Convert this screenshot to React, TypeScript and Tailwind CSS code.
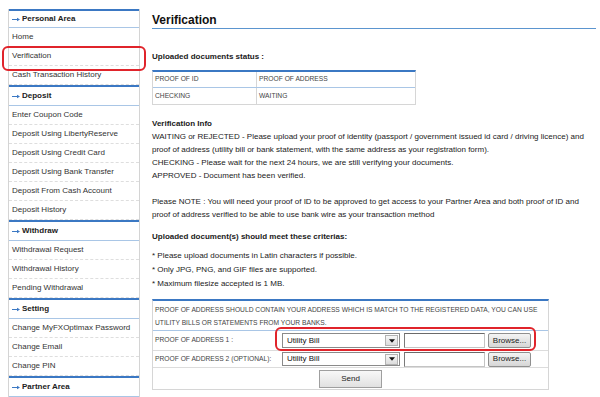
const sideGroups = [
  { title: "Personal Area", first: true, items: ["Home", "Verification", "Cash Transaction History"] },
  {
    title: "Deposit",
    first: false,
    items: [
      "Enter Coupon Code",
      "Deposit Using LibertyReserve",
      "Deposit Using Credit Card",
      "Deposit Using Bank Transfer",
      "Deposit From Cash Account",
      "Deposit History",
    ],
  },
  { title: "Withdraw", first: false, items: ["Withdrawal Request", "Withdrawal History", "Pending Withdrawal"] },
  { title: "Setting", first: false, items: ["Change MyFXOptimax Password", "Change Email", "Change PIN"] },
  { title: "Partner Area", first: false, items: [] as string[] },
];

function Arrow() {
  return (
    <svg width="8" height="5" viewBox="0 0 8 5" className="shrink-0">
      <path d="M0 2.5H5.5" stroke="#3b78c3" strokeWidth="1" />
      <path d="M5 0.8L8 2.5L5 4.2Z" fill="#3b78c3" />
    </svg>
  );
}

function Sidebar() {
  return (
    <aside className="ml-[8px] mt-[9px] w-[132px] shrink-0 border-x border-[#d4d4d4]">
      {sideGroups.map((group) => (
        <div key={group.title}>
          <div
            className={
              group.first
                ? "h-[19px] flex items-center gap-[2px] pl-[3px] border-t-2 border-t-[#3b78c3] border-b border-b-[#a9c6e6] font-bold text-[#222]"
                : "h-[21px] flex items-center gap-[2px] pl-[3px] border-t-2 border-t-[#3b78c3] border-b border-b-[#a9c6e6] font-bold text-[#222]"
            }
          >
            <Arrow />
            <span>{group.title}</span>
          </div>
          {group.items.map((item) => (
            <div
              key={item}
              className="h-[19px] flex items-center pl-[3px] border-b border-dashed border-[#dedede] text-[#333] whitespace-nowrap"
            >
              {item}
            </div>
          ))}
        </div>
      ))}
    </aside>
  );
}

function SelectBox({ tall }: { tall: boolean }) {
  return (
    <div
      className={
        tall
          ? "w-[118px] h-[15px] flex items-center justify-between border border-[#8a8a8a] bg-white"
          : "w-[118px] h-[14px] flex items-center justify-between border border-[#8a8a8a] bg-white"
      }
    >
      <span className="pl-[4px] text-[8px] text-[#111]">Utility Bill</span>
      <div className="mr-[1px] w-[13px] h-[11px] flex items-center justify-center border border-[#b3b3b3] bg-gradient-to-b from-[#f7f7f7] to-[#dcdcdc]">
        <svg width="6" height="4" viewBox="0 0 6 4">
          <path d="M0 0.3H6L3 3.7Z" fill="#111" />
        </svg>
      </div>
    </div>
  );
}

function UploadRow({ label, tall }: { label: string; tall: boolean }) {
  return (
    <div
      className={
        tall
          ? "h-[20px] flex items-center border-b border-[#dcdcdc]"
          : "h-[17px] flex items-center border-b border-[#dcdcdc]"
      }
    >
      <div className="w-[129px] pl-[2px] whitespace-nowrap">{label}</div>
      <SelectBox tall={tall} />
      <div className="ml-[4px] w-[81px] h-[15px] border border-t-[#6a6a6a] border-l-[#7a7a7a] border-r-[#c4c4c4] border-b-[#c4c4c4] bg-white" />
      <div className="ml-[3px] w-[43px] h-[15px] flex items-center justify-center rounded-[2px] border border-[#8f8f8f] bg-gradient-to-b from-[#f4f4f4] to-[#d6d6d6] text-[8px] text-[#222]">
        Browse...
      </div>
    </div>
  );
}

export default function App() {
  return (
    <div className="relative w-[600px] h-[397px] overflow-hidden bg-white flex items-start font-['Liberation_Sans',Arial,sans-serif] text-[8px] text-[#1a1a1a]">
      <Sidebar />

      <main className="ml-[12px] w-[444px] shrink-0">
        <h1 className="pt-[13px] pb-[1px] text-[12px] leading-[14px] font-bold text-[#111] border-b border-[#5b95cf]">
          Verification
        </h1>

        <p className="mt-[21px] leading-[13px] font-bold">Uploaded documents status :</p>

        {/* status table */}
        <div className="mt-[7px] w-[264px] border-t-2 border-t-[#3b78c3] border-x border-x-[#d6d6d6] border-b border-b-[#d6d6d6] text-[6.7px] text-[#444]">
          <div className="h-[16px] grid grid-cols-[104px_1fr] border-b border-[#a9c6e6]">
            <div className="flex items-center pl-[2px] border-r border-[#d6d6d6]">PROOF OF ID</div>
            <div className="flex items-center pl-[2px]">PROOF OF ADDRESS</div>
          </div>
          <div className="h-[16px] grid grid-cols-[104px_1fr]">
            <div className="flex items-center pl-[2px] border-r border-[#d6d6d6]">CHECKING</div>
            <div className="flex items-center pl-[2px]">WAITING</div>
          </div>
        </div>

        <div className="mt-[12px] leading-[13px] whitespace-nowrap">
          <p className="font-bold">Verification Info</p>
          <p>
            WAITING or REJECTED - Please upload your proof of identity (passport / government issued id card / driving licence) and
            <br />
            proof of address (utility bill or bank statement, with the same address as your registration form).
            <br />
            CHECKING - Please wait for the next 24 hours, we are still verifying your documents.
            <br />
            APPROVED - Document has been verified.
          </p>
        </div>

        <p className="mt-[13px] leading-[13px] whitespace-nowrap">
          Please NOTE : You will need your proof of ID to be approved to get access to your Partner Area and both proof of ID and
          <br />
          proof of address verified to be able to use bank wire as your transaction method
        </p>

        <p className="mt-[9px] leading-[13px] font-bold">Uploaded document(s) should meet these criterias:</p>

        <ul className="mt-[6px] leading-[14px]">
          <li>* Please upload documents in Latin characters if possible.</li>
          <li>* Only JPG, PNG, and GIF files are supported.</li>
          <li>* Maximum filesize accepted is 1 MB.</li>
        </ul>

        {/* upload form */}
        <div className="mt-[8px] w-[397px] border-t-2 border-t-[#3b78c3] border-x border-x-[#d6d6d6] border-b border-b-[#d6d6d6] text-[6.7px] text-[#444]">
          <div className="pt-[2px] pb-[1px] px-[2px] leading-[13px] border-b border-[#a9c6e6] whitespace-nowrap">
            PROOF OF ADDRESS SHOULD CONTAIN YOUR ADDRESS WHICH IS MATCH TO THE REGISTERED DATA, YOU CAN USE
            <br />
            UTILITY BILLS OR STATEMENTS FROM YOUR BANKS.
          </div>
          <UploadRow label="PROOF OF ADDRESS 1 :" tall={true} />
          <UploadRow label="PROOF OF ADDRESS 2 (OPTIONAL):" tall={false} />
          <div className="h-[21px] flex items-center justify-center">
            <div className="w-[63px] h-[18px] flex items-center justify-center border border-[#9f9f9f] bg-gradient-to-b from-[#f8f8f8] to-[#e1e1e1] text-[8px] text-[#222]">
              Send
            </div>
          </div>
        </div>
      </main>

      {/* red highlight marks */}
      <div className="absolute left-[2px] top-[46px] w-[144px] h-[25px] rounded-[6px] border-2 border-[#e0242b]" />
      <div className="absolute left-[275px] top-[327px] w-[261px] h-[24px] rounded-[6px] border-2 border-[#e0242b]" />
    </div>
  );
}
